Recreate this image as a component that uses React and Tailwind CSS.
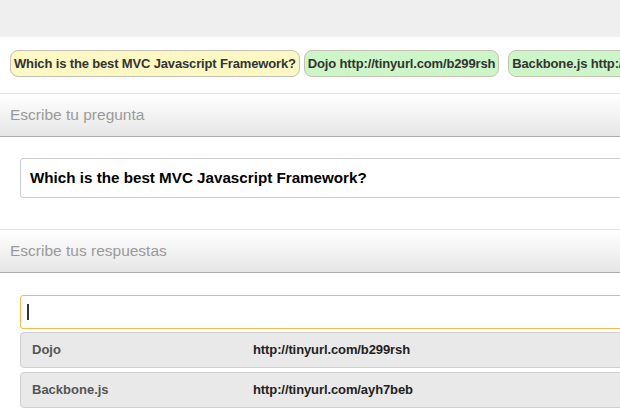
import React from 'react';

const font = { fontFamily: '"Liberation Sans", Arial, sans-serif' };

const Pill = ({ text, green }) => (
  <div
    className={`h-[27px] px-[3px] flex items-center rounded-[8px] border border-[#c4c0b4] text-[13px] tracking-[-0.15px] font-bold text-[#333] whitespace-nowrap shrink-0 ${
      green ? 'bg-[#ccf5c8]' : 'bg-[#fbf8c4]'
    }`}
  >
    {text}
  </div>
);

const Header = ({ label }) => (
  <div className="h-[44px] border-t border-t-[#e2e2e2] border-b border-b-[#aaaaaa] bg-gradient-to-b from-white to-[#e6e6e6] flex items-center px-[10px] text-[15.5px] text-[#9a9a9a]">
    {label}
  </div>
);

const AnswerRow = ({ name, url }) => (
  <div className="h-[36px] w-[640px] ml-5 flex items-center rounded-[4px] border border-[#cfcfcf] bg-[#e9e9e9] text-[13px] font-bold">
    <span className="w-[232px] pl-[11px] text-[#555]">{name}</span>
    <span className="text-[#222] tracking-[-0.1px]">{url}</span>
  </div>
);

const App = () => {
  return (
    <div className="w-[620px] h-[420px] overflow-hidden bg-white" style={font}>
      <div className="h-[37px] bg-[#efefef]" />
      <div className="h-[56px] pt-[13px] pl-[10px] flex gap-[4px] overflow-hidden">
        <Pill text="Which is the best MVC Javascript Framework?" />
        <Pill text="Dojo http://tinyurl.com/b299rsh" green />
        <div className="w-[1px] shrink-0" />
        <Pill text="Backbone.js http://tinyurl.com/ayh7beb" green />
      </div>
      <Header label="Escribe tu pregunta" />
      <div className="mt-[21px] ml-5 w-[640px] h-[40px] border border-[#cccccc] rounded-[3px] flex items-center pl-[9px] text-[15.2px] font-bold text-black">
        Which is the best MVC Javascript Framework?
      </div>
      <div className="mt-[31px]">
        <Header label="Escribe tus respuestas" />
      </div>
      <div className="mt-[22px] ml-5 w-[640px] h-[34px] border border-[#f7b84c] rounded-[3px] flex items-center pl-[6px]">
        <span className="w-[2px] h-[16px] bg-[#333]" />
      </div>
      <div className="mt-[3px] flex flex-col gap-[4px]">
        <AnswerRow name="Dojo" url="http://tinyurl.com/b299rsh" />
        <AnswerRow name="Backbone.js" url="http://tinyurl.com/ayh7beb" />
      </div>
    </div>
  );
};

export default App;
